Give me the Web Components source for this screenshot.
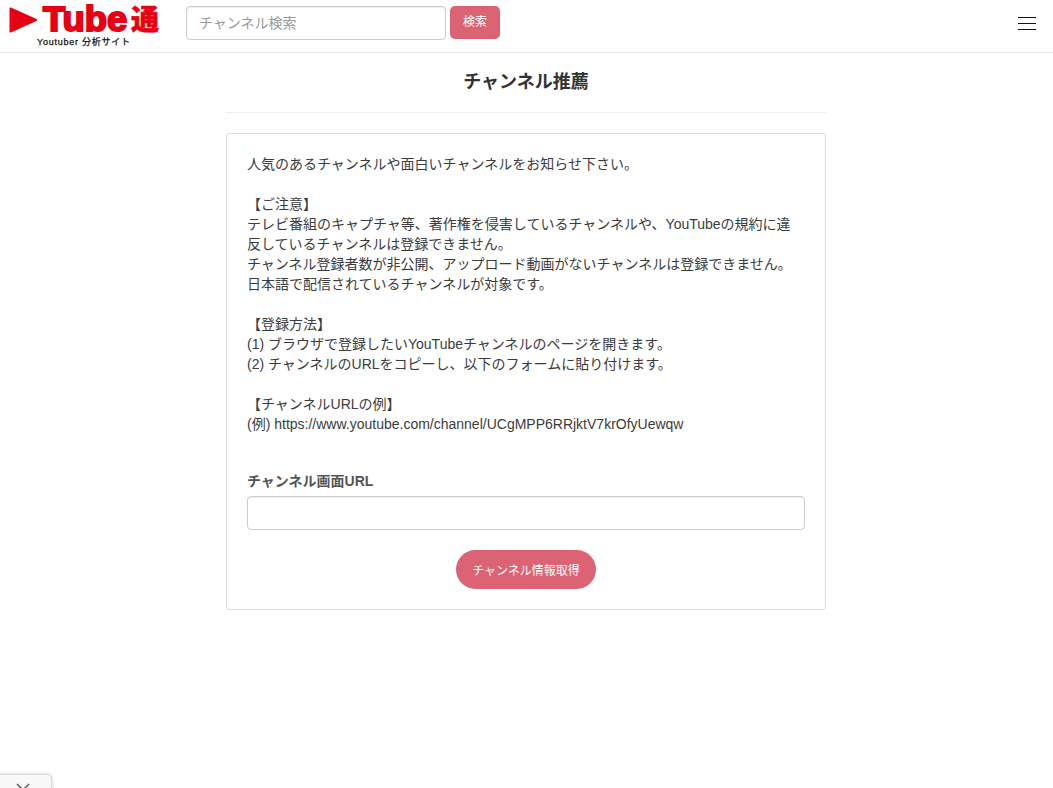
<!DOCTYPE html>
<html lang="ja">
<head>
<meta charset="utf-8">
<title>チャンネル推薦</title>
<style>
html, body { margin: 0; padding: 0; background: #fff; }
body {
    font-family: "Liberation Sans", "Noto Sans CJK JP", sans-serif;
    font-size: 14px;
    line-height: 20px;
    color: #3c3c3c;
    height: 788px;
    overflow: hidden;
    padding-right: 1px;
}
</style>
</head>
<body>
<site-header></site-header>
<page-title>チャンネル推薦</page-title>
<panel-card>
    <div>人気のあるチャンネルや面白いチャンネルをお知らせ下さい。</div>
    <br>
    <div>【ご注意】</div>
    <div>テレビ番組のキャプチャ等、著作権を侵害しているチャンネルや、YouTubeの規約に違<br>反しているチャンネルは登録できません。</div>
    <div>チャンネル登録者数が非公開、アップロード動画がないチャンネルは登録できません。</div>
    <div>日本語で配信されているチャンネルが対象です。</div>
    <br>
    <div>【登録方法】</div>
    <div>(1) ブラウザで登録したいYouTubeチャンネルのページを開きます。</div>
    <div>(2) チャンネルのURLをコピーし、以下のフォームに貼り付けます。</div>
    <br>
    <div>【チャンネルURLの例】</div>
    <div>(例) https://www.youtube.com/channel/UCgMPP6RRjktV7krOfyUewqw</div>
    <url-form slot="form"></url-form>
</panel-card>
<ad-tab></ad-tab>

<script>
const fontStack = '"Liberation Sans", "Noto Sans CJK JP", sans-serif';

class BrandLogo extends HTMLElement {
    constructor() {
        super();
        this.attachShadow({mode: 'open'});
        this.shadowRoot.innerHTML = `
<style>
:host { display: block; width: 160px; height: 48px; position: relative; flex: none; }
svg { position: absolute; left: 9px; top: 7px; }
.name {
    position: absolute; left: 43px; top: -1px;
    font: 900 35px/40px "Liberation Sans", sans-serif;
    color: #e60012;
    -webkit-text-stroke: 2px #e60012;
    white-space: nowrap;
    transform: scaleX(1.04);
    transform-origin: left top;
}
.tsu {
    position: absolute; left: 131px; top: 0;
    font: 900 28px/36px "Noto Sans CJK JP", sans-serif;
    color: #e60012;
    -webkit-text-stroke: .6px #e60012;
    white-space: nowrap;
}
.sub {
    position: absolute; left: 37px; top: 36px;
    font: 9px/12px "Liberation Sans", "Noto Sans CJK JP", sans-serif;
    letter-spacing: .75px;
    -webkit-text-stroke: .25px #111;
    color: #111;
    white-space: nowrap;
}
</style>
<svg width="28" height="26" viewBox="0 0 28 26"><path d="M1.5 1.5 L27 13 L1.5 24.5 Z" fill="#e60012" stroke="#e60012" stroke-width="2" stroke-linejoin="round"/></svg>
<span class="name">Tube</span>
<span class="tsu">通</span>
<span class="sub">Youtuber 分析サイト</span>`;
    }
}
customElements.define('brand-logo', BrandLogo);

class SearchBox extends HTMLElement {
    constructor() {
        super();
        this.attachShadow({mode: 'open'});
        this.shadowRoot.innerHTML = `
<style>
:host { display: flex; gap: 4px; align-items: flex-start; margin: 6px 0 0 26px; }
input {
    box-sizing: border-box; width: 260px; height: 34px;
    padding: 0 12px; margin: 0;
    border: 1px solid #ccc; border-radius: 4px;
    font: 14px ${fontStack}; color: #555; background: #fff; outline: none;
    box-shadow: inset 0 1px 1px rgba(0,0,0,.075);
}
input::placeholder { color: #999; opacity: 1; }
button {
    box-sizing: border-box; width: 50px; height: 33px; margin: 0; padding: 0 0 5px;
    border: none; border-radius: 5px;
    background: #db6374; color: #fff;
    font: 12px ${fontStack};
}
</style>
<input type="text" placeholder="チャンネル検索"><button>検索</button>`;
    }
}
customElements.define('search-box', SearchBox);

class MenuButton extends HTMLElement {
    constructor() {
        super();
        this.attachShadow({mode: 'open'});
        this.shadowRoot.innerHTML = `
<style>
:host { display: flex; flex-direction: column; gap: 5px; width: 18px; margin: 17px 17px 0 auto; }
i { display: block; height: 1px; background: #111; }
</style>
<i></i><i></i><i></i>`;
    }
}
customElements.define('menu-button', MenuButton);

class SiteHeader extends HTMLElement {
    constructor() {
        super();
        this.attachShadow({mode: 'open'});
        this.shadowRoot.innerHTML = `
<style>
:host {
    display: flex; align-items: flex-start; box-sizing: border-box;
    width: calc(100% + 1px);
    height: 53px; border-bottom: 1px solid #e7eced; background: #fff;
}
</style>
<brand-logo></brand-logo><search-box></search-box><menu-button></menu-button>`;
    }
}
customElements.define('site-header', SiteHeader);

class PageTitle extends HTMLElement {
    constructor() {
        super();
        this.attachShadow({mode: 'open'});
        this.shadowRoot.innerHTML = `
<style>
:host {
    display: block; box-sizing: border-box; width: 600px; height: 60px;
    margin: 0 auto 20px; padding-top: 18px;
    border-bottom: 1px solid #eee;
    font-size: 18px; line-height: 22px; font-weight: bold; text-align: center; color: #333;
}
</style>
<slot></slot>`;
    }
}
customElements.define('page-title', PageTitle);

class PanelCard extends HTMLElement {
    constructor() {
        super();
        this.attachShadow({mode: 'open'});
        this.shadowRoot.innerHTML = `
<style>
:host {
    display: block; box-sizing: border-box; width: 600px; margin: 0 auto;
    padding: 20px; border: 1px solid #ddd; border-radius: 3px; background: #fff;
}
</style>
<slot></slot>
<slot name="form"></slot>`;
    }
}
customElements.define('panel-card', PanelCard);

class UrlForm extends HTMLElement {
    constructor() {
        super();
        this.attachShadow({mode: 'open'});
        this.shadowRoot.innerHTML = `
<style>
:host { display: block; padding-top: 37px; }
label { display: block; font-weight: bold; color: #555; margin-bottom: 5px; }
input {
    display: block; box-sizing: border-box; width: 100%; height: 34px; margin: 0;
    border: 1px solid #ccc; border-radius: 4px; background: #fff; outline: none; padding: 0 12px;
    box-shadow: inset 0 1px 1px rgba(0,0,0,.075);
}
.actions { display: flex; justify-content: center; margin-top: 20px; }
button {
    box-sizing: border-box; width: 140px; height: 39px; padding: 0; margin: 0;
    border: none; border-radius: 20px; background: #db6374; color: #fff;
    font: 12px ${fontStack};
}
</style>
<label>チャンネル画面URL</label>
<input type="text">
<div class="actions"><button>チャンネル情報取得</button></div>`;
    }
}
customElements.define('url-form', UrlForm);

class AdTab extends HTMLElement {
    constructor() {
        super();
        this.attachShadow({mode: 'open'});
        this.shadowRoot.innerHTML = `
<style>
:host {
    position: fixed; left: -5px; bottom: -6px; box-sizing: border-box;
    width: 57px; height: 20px; background: #f8f8f8;
    border: 1px solid #ddd; border-radius: 5px 5px 0 0;
    box-shadow: 0 0 3px rgba(0,0,0,.25);
}
svg { position: absolute; left: 19px; top: 8px; }
</style>
<svg width="16" height="10" viewBox="0 0 16 10"><path d="M2 1 L8 7 L14 1" fill="none" stroke="#666" stroke-width="1.6"/></svg>`;
    }
}
customElements.define('ad-tab', AdTab);
</script>
</body>
</html>
